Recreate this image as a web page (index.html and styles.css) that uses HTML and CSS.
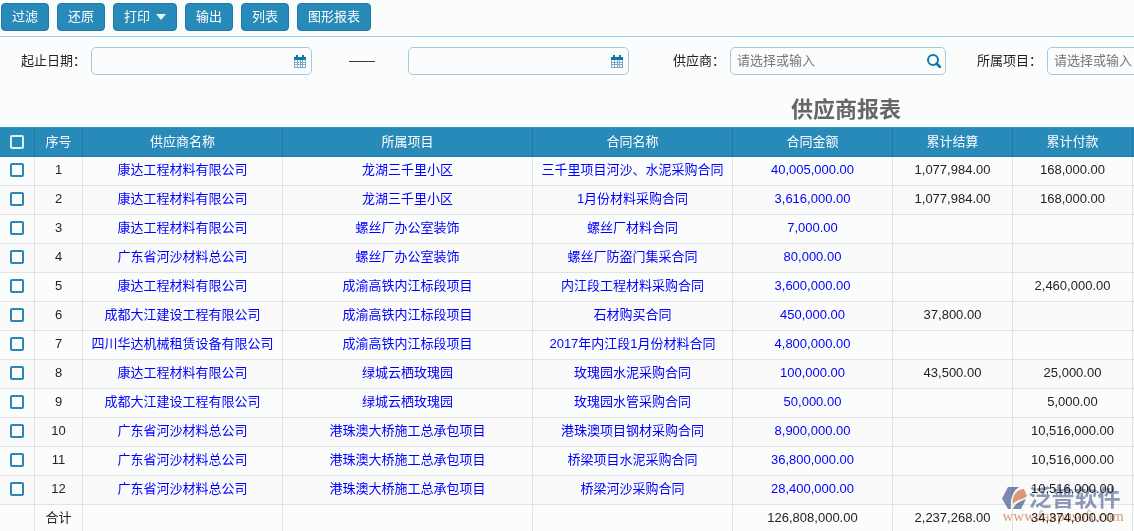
FILE: index.html
```html
<!DOCTYPE html>
<html lang="zh-CN">
<head>
  <meta charset="UTF-8" />
  <meta name="viewport" content="width=device-width, initial-scale=1.0"/>
  <title>供应商报表</title>
  <link rel="stylesheet" href="styles.css">
</head>
<body>
  <div class="page">
    <div class="toolbar">
      <button type="button" class="btn">过滤</button>
      <button type="button" class="btn">还原</button>
      <button type="button" class="btn btn-menu">打印<span class="caret"></span></button>
      <button type="button" class="btn">输出</button>
      <button type="button" class="btn">列表</button>
      <button type="button" class="btn">图形报表</button>
    </div>

    <form class="filters">
      <div class="date-range">
        <div class="field">
          <label for="startDate">起止日期：</label>
          <div class="input-box date-box">
            <input type="text" id="startDate" name="startDate" />
            <svg class="icon-calendar" viewBox="0 0 12 13" width="12" height="13" aria-hidden="true">
              <path d="M0 2h12v11H0z" fill="#7fa9c4"/>
              <path d="M0 2h12v3H0zM2 0h2v3H2zM8 0h2v3H8z" fill="#0e78ae"/>
              <path d="M1 5h2v2H1zM4 5h2v2H4zM7 5h1v2H7zM9 5h2v2H9zM1 8h2v1H1zM4 8h2v1H4zM7 8h1v1H7zM9 8h2v1H9zM1 10h2v2H1zM4 10h2v2H4zM7 10h1v2H7zM9 10h2v2H9z" fill="#fff"/>
            </svg>
          </div>
        </div>
        <span class="dash">——</span>
        <div class="input-box date-box">
          <input type="text" id="endDate" name="endDate" aria-label="截止日期" />
          <svg class="icon-calendar" viewBox="0 0 12 13" width="12" height="13" aria-hidden="true">
            <path d="M0 2h12v11H0z" fill="#7fa9c4"/>
            <path d="M0 2h12v3H0zM2 0h2v3H2zM8 0h2v3H8z" fill="#0e78ae"/>
            <path d="M1 5h2v2H1zM4 5h2v2H4zM7 5h1v2H7zM9 5h2v2H9zM1 8h2v1H1zM4 8h2v1H4zM7 8h1v1H7zM9 8h2v1H9zM1 10h2v2H1zM4 10h2v2H4zM7 10h1v2H7zM9 10h2v2H9z" fill="#fff"/>
          </svg>
        </div>
      </div>
      <div class="field supplier">
        <label for="supplier">供应商：</label>
        <div class="input-box">
          <input type="text" id="supplier" name="supplier" placeholder="请选择或输入" />
          <svg class="icon-search" viewBox="0 0 14 14" width="14" height="14" fill="none" stroke="#0e78ae" aria-hidden="true">
            <circle cx="6" cy="6" r="5" stroke-width="2"/>
            <path d="M9.5 9.5L13 13" stroke-width="2.6" stroke-linecap="round"/>
          </svg>
        </div>
      </div>
      <div class="field project">
        <label for="project">所属项目：</label>
        <div class="input-box">
          <input type="text" id="project" name="project" placeholder="请选择或输入" />
          <svg class="icon-search" viewBox="0 0 14 14" width="14" height="14" fill="none" stroke="#0e78ae" aria-hidden="true">
            <circle cx="6" cy="6" r="5" stroke-width="2"/>
            <path d="M9.5 9.5L13 13" stroke-width="2.6" stroke-linecap="round"/>
          </svg>
        </div>
      </div>
    </form>

    <div class="report">
      <h1>供应商报表</h1>
      <table>
        <colgroup>
          <col class="col-check"><col class="col-no"><col class="col-supplier"><col class="col-project"><col class="col-contract"><col class="col-amount"><col class="col-money"><col class="col-money"><col>
        </colgroup>
        <thead>
          <tr><th><input type="checkbox" aria-label="全选"></th><th>序号</th><th>供应商名称</th><th>所属项目</th><th>合同名称</th><th>合同金额</th><th>累计结算</th><th>累计付款</th><th></th></tr>
        </thead>
        <tbody>
          <tr><td><input type="checkbox" aria-label="选择第1行"></td><td>1</td><td><a href="#">康达工程材料有限公司</a></td><td><a href="#">龙湖三千里小区</a></td><td><a href="#">三千里项目河沙、水泥采购合同</a></td><td><a href="#">40,005,000.00</a></td><td>1,077,984.00</td><td>168,000.00</td><td></td></tr>
          <tr><td><input type="checkbox" aria-label="选择第2行"></td><td>2</td><td><a href="#">康达工程材料有限公司</a></td><td><a href="#">龙湖三千里小区</a></td><td><a href="#">1月份材料采购合同</a></td><td><a href="#">3,616,000.00</a></td><td>1,077,984.00</td><td>168,000.00</td><td></td></tr>
          <tr><td><input type="checkbox" aria-label="选择第3行"></td><td>3</td><td><a href="#">康达工程材料有限公司</a></td><td><a href="#">螺丝厂办公室装饰</a></td><td><a href="#">螺丝厂材料合同</a></td><td><a href="#">7,000.00</a></td><td></td><td></td><td></td></tr>
          <tr><td><input type="checkbox" aria-label="选择第4行"></td><td>4</td><td><a href="#">广东省河沙材料总公司</a></td><td><a href="#">螺丝厂办公室装饰</a></td><td><a href="#">螺丝厂防盗门集采合同</a></td><td><a href="#">80,000.00</a></td><td></td><td></td><td></td></tr>
          <tr><td><input type="checkbox" aria-label="选择第5行"></td><td>5</td><td><a href="#">康达工程材料有限公司</a></td><td><a href="#">成渝高铁内江标段项目</a></td><td><a href="#">内江段工程材料采购合同</a></td><td><a href="#">3,600,000.00</a></td><td></td><td>2,460,000.00</td><td></td></tr>
          <tr><td><input type="checkbox" aria-label="选择第6行"></td><td>6</td><td><a href="#">成都大江建设工程有限公司</a></td><td><a href="#">成渝高铁内江标段项目</a></td><td><a href="#">石材购买合同</a></td><td><a href="#">450,000.00</a></td><td>37,800.00</td><td></td><td></td></tr>
          <tr><td><input type="checkbox" aria-label="选择第7行"></td><td>7</td><td><a href="#">四川华达机械租赁设备有限公司</a></td><td><a href="#">成渝高铁内江标段项目</a></td><td><a href="#">2017年内江段1月份材料合同</a></td><td><a href="#">4,800,000.00</a></td><td></td><td></td><td></td></tr>
          <tr><td><input type="checkbox" aria-label="选择第8行"></td><td>8</td><td><a href="#">康达工程材料有限公司</a></td><td><a href="#">绿城云栖玫瑰园</a></td><td><a href="#">玫瑰园水泥采购合同</a></td><td><a href="#">100,000.00</a></td><td>43,500.00</td><td>25,000.00</td><td></td></tr>
          <tr><td><input type="checkbox" aria-label="选择第9行"></td><td>9</td><td><a href="#">成都大江建设工程有限公司</a></td><td><a href="#">绿城云栖玫瑰园</a></td><td><a href="#">玫瑰园水管采购合同</a></td><td><a href="#">50,000.00</a></td><td></td><td>5,000.00</td><td></td></tr>
          <tr><td><input type="checkbox" aria-label="选择第10行"></td><td>10</td><td><a href="#">广东省河沙材料总公司</a></td><td><a href="#">港珠澳大桥施工总承包项目</a></td><td><a href="#">港珠澳项目钢材采购合同</a></td><td><a href="#">8,900,000.00</a></td><td></td><td>10,516,000.00</td><td></td></tr>
          <tr><td><input type="checkbox" aria-label="选择第11行"></td><td>11</td><td><a href="#">广东省河沙材料总公司</a></td><td><a href="#">港珠澳大桥施工总承包项目</a></td><td><a href="#">桥梁项目水泥采购合同</a></td><td><a href="#">36,800,000.00</a></td><td></td><td>10,516,000.00</td><td></td></tr>
          <tr><td><input type="checkbox" aria-label="选择第12行"></td><td>12</td><td><a href="#">广东省河沙材料总公司</a></td><td><a href="#">港珠澳大桥施工总承包项目</a></td><td><a href="#">桥梁河沙采购合同</a></td><td><a href="#">28,400,000.00</a></td><td></td><td>10,516,000.00</td><td></td></tr>
        </tbody>
        <tfoot>
          <tr><td></td><td>合计</td><td></td><td></td><td></td><td>126,808,000.00</td><td>2,237,268.00</td><td>34,374,000.00</td><td></td></tr>
        </tfoot>
      </table>
    </div>

    <div class="watermark">
      <div class="brand">
        <svg viewBox="0 0 25 23" width="25" height="23" aria-hidden="true">
          <path d="M6 0H17C11 4 8 11 9 22H6L0 11.500z" fill="#7b8bb0"/>
          <path d="M11 17C10 9 14 2 22 2L25 9C22 13 15 12 11 17z" fill="#e09a78"/>
          <path d="M11 22C13 16 19 14 24 12L19 22z" fill="#7b8bb0"/>
        </svg>
        <span>泛普软件</span>
      </div>
      <div class="site">www.fanpusoft.com</div>
    </div>
  </div>
</body>
</html>
```
FILE: styles.css
```css
* {
  box-sizing: border-box;
}

body {
  margin: 0;
  font-family: "Liberation Sans", "Noto Sans CJK SC", sans-serif;
  font-size: 13px;
  line-height: 18px;
  color: #222;
  background-color: #fbfdfd;
}

.page {
  position: relative;
  height: 100vh;
  overflow: hidden;
}

/* toolbar */
.toolbar {
  display: flex;
  gap: 8px;
  padding: 3px 1px 5px;
  border-bottom: 1px solid #a3c8e2;
}

.btn {
  display: flex;
  align-items: center;
  height: 28px;
  padding: 0 10px;
  font: inherit;
  color: #fff;
  background-color: #288ab8;
  border: 1px solid #227ba5;
  border-radius: 4px;
  cursor: pointer;
}

.btn:hover {
  background-color: #2380ac;
}

.caret {
  margin-left: 6px;
  border-top: 6px solid #e4f8fd;
  border-left: 5px solid transparent;
  border-right: 5px solid transparent;
}

/* filters */
.filters {
  display: flex;
  align-items: center;
  padding: 10px 0 0 21px;
  white-space: nowrap;
}

.date-range,
.field {
  display: flex;
  align-items: center;
  flex-shrink: 0;
}

.field {
  gap: 5px;
}

.dash {
  margin: 0 33px 0 37px;
}

.supplier {
  margin-left: 44px;
}

.project {
  margin-left: 31px;
}

.input-box {
  display: flex;
  align-items: center;
  width: 216px;
  height: 28px;
  padding: 0 4px 0 6px;
  border: 1px solid #a3c8e2;
  border-radius: 5px;
}

.date-box {
  width: 221px;
  padding-right: 5px;
}

.input-box input {
  flex: 1;
  min-width: 0;
  height: 24px;
  padding: 0 0 2px;
  font: inherit;
  color: #222;
  background: transparent;
  border: none;
  outline: none;
}

.input-box input::placeholder {
  color: #777;
}

/* report, wider than the window and centred on its own width */
.report {
  width: 1692px;
}

h1 {
  margin: 0;
  padding: 21px 0 3px;
  font-size: 22px;
  line-height: 28px;
  text-align: center;
  color: #666;
}

table {
  width: 100%;
  table-layout: fixed;
  border-collapse: separate;
  border-spacing: 0;
}

.col-check { width: 35px; }
.col-no { width: 48px; }
.col-supplier { width: 200px; }
.col-project { width: 250px; }
.col-contract { width: 200px; }
.col-amount { width: 160px; }
.col-money { width: 120px; }

th,
td {
  height: 29px;
  padding: 0 0 2px;
  text-align: center;
  white-space: nowrap;
  border-right: 1px solid #e2e4e4;
  border-bottom: 1px solid #e2e4e4;
}

th {
  height: 30px;
  padding: 0;
  font-weight: normal;
  color: #fff;
  background-color: #288ab8;
  border-color: #227ba5;
  border-top: 1px solid #2f97c6;
}

tbody tr:nth-child(even) {
  background-color: #fafafa;
}

td a {
  color: #0000ff;
  text-decoration: none;
}

td a:hover {
  text-decoration: underline;
}

input[type="checkbox"] {
  appearance: none;
  display: block;
  width: 14px;
  height: 14px;
  margin: 0 auto;
  border: 2px solid #2a86b6;
  border-radius: 2px;
}

th input[type="checkbox"] {
  border-color: #d8f1fa;
}

input[type="checkbox"]:checked {
  background-color: #8fc3de;
}

/* watermark, multiplied so the figures under it stay readable */
.watermark {
  position: absolute;
  right: 10px;
  bottom: 9px;
  mix-blend-mode: multiply;
  pointer-events: none;
}

.brand {
  display: flex;
  align-items: center;
  gap: 1px;
  height: 24px;
  font-size: 23px;
  font-weight: bold;
  line-height: 24px;
  color: #8f9cbb;
}

.site {
  font-family: "Liberation Serif", serif;
  font-size: 15px;
  line-height: 12px;
  text-align: center;
  color: #e09a78;
}
```
